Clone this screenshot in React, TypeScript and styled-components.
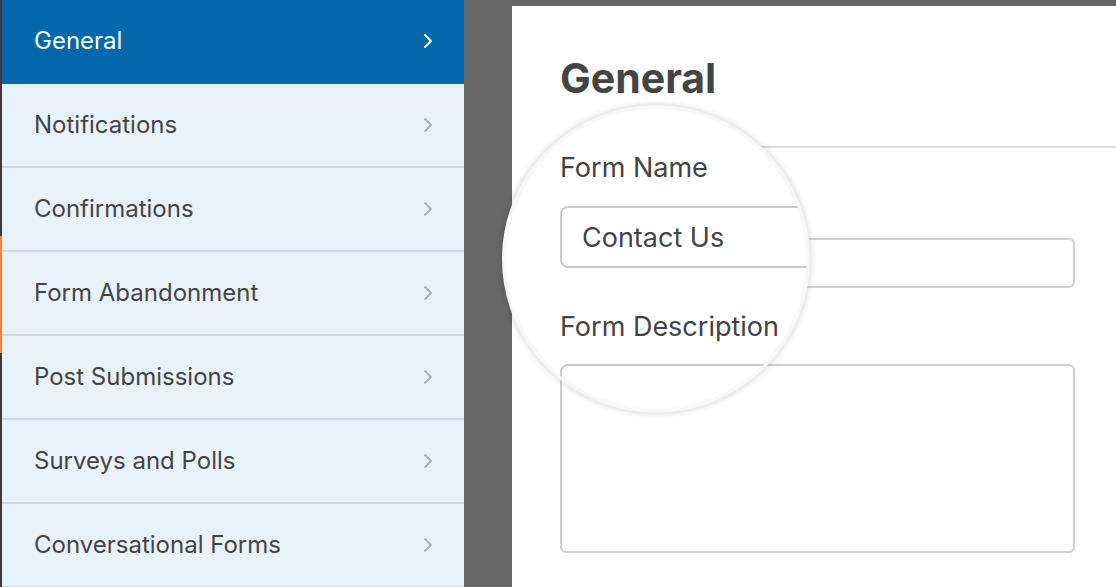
import React from 'react'
import styled, { createGlobalStyle } from 'styled-components'

const GlobalStyle = createGlobalStyle`
  html, body {
    margin: 0;
    padding: 0;
    background: #676767;
  }
  body {
    font-family: Inter, "Noto Sans", "Liberation Sans", sans-serif;
  }
`

const items = [
  'General',
  'Notifications',
  'Confirmations',
  'Form Abandonment',
  'Post Submissions',
  'Surveys and Polls',
  'Conversational Forms',
]

const Chevron = ({ active }: { active: boolean }) => (
  <svg width="10" height="16" viewBox="0 0 10 16">
    <polyline
      points="2,2 8,8 2,14"
      fill="none"
      stroke={active ? '#ffffff' : '#a9b1ba'}
      strokeWidth="2"
      strokeLinecap="round"
      strokeLinejoin="round"
    />
  </svg>
)

const App = () => {
  return (
    <>
      <GlobalStyle />
      <Page>
        <Sidebar>
          <Marker />
          <Nav>
            {items.map((label, i) => (
              <NavItem key={label} $active={i === 0}>
                <span>{label}</span>
                <Chevron active={i === 0} />
              </NavItem>
            ))}
          </Nav>
        </Sidebar>
        <Main>
          <Panel>
            <Title>General</Title>
            <Divider />
            <Fields>
              <Input $gap={90} $height={50} />
              <Input $gap={76} $height={189} />
            </Fields>
          </Panel>
        </Main>
        <Lens>
          <LensLabel $gap={44}>Form Name</LensLabel>
          <LensInput>Contact Us</LensInput>
          <LensLabel $gap={43}>Form Description</LensLabel>
          <LensArea />
        </Lens>
      </Page>
    </>
  )
}
export default App

const Page = styled.div`
  position: relative;
  width: 1116px;
  height: 587px;
  display: flex;
  overflow: hidden;
  background: #676767;
`
const Sidebar = styled.div`
  position: relative;
  width: 462px;
  flex-shrink: 0;
  border-left: 2px solid #3b3b3b;
  background: #e8f2fb;
`
const Marker = styled.div`
  position: absolute;
  left: -2px;
  top: 236px;
  width: 2px;
  height: 117px;
  background: #f0843c;
`
const Nav = styled.div`
  display: flex;
  flex-direction: column;
`
const NavItem = styled.div<{ $active: boolean }>`
  box-sizing: border-box;
  height: 84px;
  display: flex;
  align-items: center;
  justify-content: space-between;
  padding: 0 31px 0 32px;
  border-bottom: 2px solid ${p => (p.$active ? '#0267ab' : '#cfd9e3')};
  background: ${p => (p.$active ? '#0267ab' : '#e8f2fb')};
  color: ${p => (p.$active ? '#ffffff' : '#444444')};
  font-size: 24px;
  span {
    line-height: 1;
  }
`
const Main = styled.div`
  flex: 1;
  display: flex;
  padding: 6px 0 0 48px;
`
const Panel = styled.div`
  flex: 1;
  background: #ffffff;
  display: flex;
  flex-direction: column;
`
const Title = styled.h1`
  margin: 52px 0 0 48px;
  font-size: 41px;
  line-height: 1;
  font-weight: 700;
  color: #444444;
`
const Divider = styled.div`
  margin: 47px 0 0 160px;
  height: 2px;
  background: #dddddd;
`
const Fields = styled.div`
  display: flex;
  flex-direction: column;
  padding: 0 41px 0 48px;
`
const Input = styled.div<{ $gap: number; $height: number }>`
  box-sizing: border-box;
  margin-top: ${p => p.$gap}px;
  height: ${p => p.$height}px;
  border: 2px solid #d0d0d0;
  border-radius: 6px;
`
const Lens = styled.div`
  position: absolute;
  left: 502px;
  top: 105px;
  box-sizing: border-box;
  width: 308px;
  height: 308px;
  border-radius: 50%;
  border: 3px solid #f7f7f7;
  background: #ffffff;
  box-shadow: 0 0 7px rgba(0, 0, 0, 0.2), inset 0 0 3px rgba(0, 0, 0, 0.08);
  overflow: hidden;
  display: flex;
  flex-direction: column;
  padding-left: 55px;
`
const LensLabel = styled.div<{ $gap: number }>`
  margin-top: ${p => p.$gap}px;
  font-size: 27px;
  line-height: 32px;
  color: #444444;
  white-space: nowrap;
`
const LensInput = styled.div`
  box-sizing: border-box;
  flex-shrink: 0;
  margin-top: 22px;
  width: 500px;
  height: 62px;
  border: 2px solid #cacaca;
  border-radius: 8px;
  display: flex;
  align-items: center;
  padding-left: 20px;
  font-size: 27px;
  color: #444444;
`
const LensArea = styled.div`
  box-sizing: border-box;
  flex-shrink: 0;
  margin-top: 21px;
  width: 500px;
  height: 200px;
  border: 2px solid #cacaca;
  border-radius: 8px;
`
